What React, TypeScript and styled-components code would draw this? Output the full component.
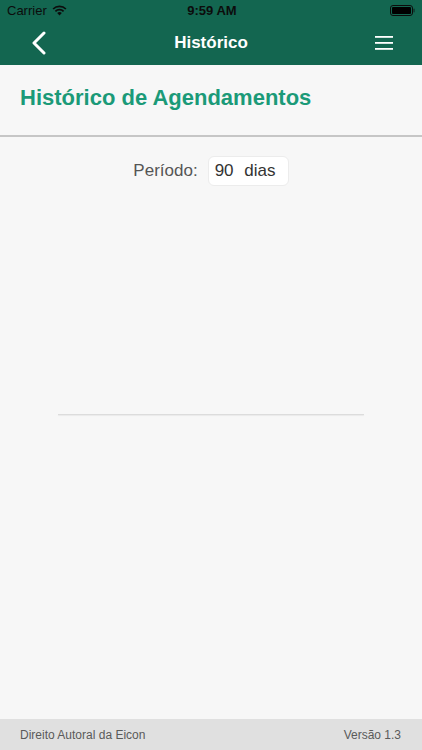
import React from "react";
import styled, { createGlobalStyle } from "styled-components";

const Global = createGlobalStyle`
  html, body { margin: 0; padding: 0; background: #f7f7f7; }
  #root { height: 750px; }
  * { box-sizing: border-box; }
`;

const Screen = styled.div`
  width: 422px;
  height: 750px;
  display: flex;
  flex-direction: column;
  background: #f7f7f7;
  font-family: "Liberation Sans", Arial, sans-serif;
  overflow: hidden;
`;

const Header = styled.header`
  background: #136650;
  display: flex;
  flex-direction: column;
`;

const StatusBar = styled.div`
  height: 20px;
  display: grid;
  grid-template-columns: 1fr auto 1fr;
  align-items: center;
  padding: 0 7px;
  color: #0c0c0c;
  font-size: 13px;
`;

const StatusLeft = styled.div`
  display: flex;
  align-items: center;
  gap: 5px;
`;

const Clock = styled.div`
  font-weight: 700;
  font-size: 13px;
  padding-left: 2px;
`;

const StatusRight = styled.div`
  display: flex;
  justify-content: flex-end;
  align-items: center;
`;

const NavBar = styled.div`
  height: 45px;
  display: grid;
  grid-template-columns: 70px 1fr 70px;
  align-items: center;
`;

const NavTitle = styled.h1`
  margin: 0;
  text-align: center;
  color: #ffffff;
  font-size: 17px;
  font-weight: 600;
  font-family: "Liberation Sans", Arial, sans-serif;
`;

const IconButton = styled.button<{ $align: "start" | "end" }>`
  background: none;
  border: none;
  padding: 0;
  display: flex;
  justify-content: ${(p) => (p.$align === "start" ? "flex-start" : "flex-end")};
  padding-left: ${(p) => (p.$align === "start" ? "31px" : "0")};
  padding-right: ${(p) => (p.$align === "end" ? "29px" : "0")};
  align-items: center;
`;

const Main = styled.main`
  flex: 1;
  display: flex;
  flex-direction: column;
`;

const SectionTitle = styled.h2`
  margin: 0;
  padding: 20px 20px 0;
  height: 72px;
  color: #1b9a78;
  font-size: 22px;
  line-height: 25px;
  font-weight: 700;
  border-bottom: 2px solid #c6c6c6;
`;

const PeriodRow = styled.div`
  display: flex;
  justify-content: center;
  align-items: center;
  gap: 10px;
  margin-top: 19px;
`;

const PeriodLabel = styled.span`
  font-size: 17px;
  color: #555555;
`;

const PeriodBox = styled.div`
  width: 81px;
  height: 30px;
  background: #ffffff;
  border: 1px solid #ececec;
  border-radius: 6px;
  display: flex;
  align-items: center;
  padding-left: 6px;
  font-size: 17px;
  color: #333333;
  word-spacing: 6px;
`;

const ListDivider = styled.div`
  margin: 228px 58px 0;
  height: 1px;
  background: #dcdcdc;
  box-shadow: 0 1px 1px rgba(0, 0, 0, 0.06);
`;

const Footer = styled.footer`
  height: 31px;
  background: #e0e0e0;
  display: flex;
  justify-content: space-between;
  align-items: center;
  padding: 0 21px 0 20px;
  font-size: 12px;
  color: #5a5a5a;
`;

const Wifi = () => (
  <svg width="15" height="11" viewBox="0 0 15 11">
    <path d="M7.5 10.5 L5.2 8.1 A3.3 3.3 0 0 1 9.8 8.1 Z" fill="#0c0c0c" />
    <path d="M3.4 6.3 A5.8 5.8 0 0 1 11.6 6.3" stroke="#0c0c0c" strokeWidth="1.7" fill="none" />
    <path d="M1.1 4 A9.1 9.1 0 0 1 13.9 4" stroke="#0c0c0c" strokeWidth="1.7" fill="none" />
  </svg>
);

const Battery = () => (
  <svg width="25" height="11" viewBox="0 0 25 11">
    <rect x="0.5" y="0.5" width="22" height="10" rx="2.5" fill="none" stroke="#0c0c0c" strokeWidth="1" />
    <rect x="2" y="2" width="19" height="7" rx="1" fill="#000" />
    <rect x="23.3" y="3.5" width="1.5" height="4" rx="0.7" fill="#0c0c0c" opacity="0.5" />
  </svg>
);

const Back = () => (
  <svg width="16" height="24" viewBox="0 0 16 24">
    <path d="M13 2 L3 12 L13 22" stroke="#fff" strokeWidth="3" fill="none" strokeLinecap="round" strokeLinejoin="round" />
  </svg>
);

const Menu = () => (
  <svg width="18" height="16" viewBox="0 0 18 16">
    <rect x="0" y="1" width="18" height="1.8" fill="#fff" />
    <rect x="0" y="7" width="18" height="1.8" fill="#fff" />
    <rect x="0" y="13" width="18" height="1.8" fill="#fff" />
  </svg>
);

export default function App() {
  return (
    <>
      <Global />
      <Screen>
        <Header>
          <StatusBar>
            <StatusLeft>
              <span>Carrier</span>
              <Wifi />
            </StatusLeft>
            <Clock>9:59 AM</Clock>
            <StatusRight>
              <Battery />
            </StatusRight>
          </StatusBar>
          <NavBar>
            <IconButton $align="start">
              <Back />
            </IconButton>
            <NavTitle>Histórico</NavTitle>
            <IconButton $align="end">
              <Menu />
            </IconButton>
          </NavBar>
        </Header>
        <Main>
          <SectionTitle>Histórico de Agendamentos</SectionTitle>
          <PeriodRow>
            <PeriodLabel>Período:</PeriodLabel>
            <PeriodBox>90 dias</PeriodBox>
          </PeriodRow>
          <ListDivider />
        </Main>
        <Footer>
          <span>Direito Autoral da Eicon</span>
          <span>Versão 1.3</span>
        </Footer>
      </Screen>
    </>
  );
}
